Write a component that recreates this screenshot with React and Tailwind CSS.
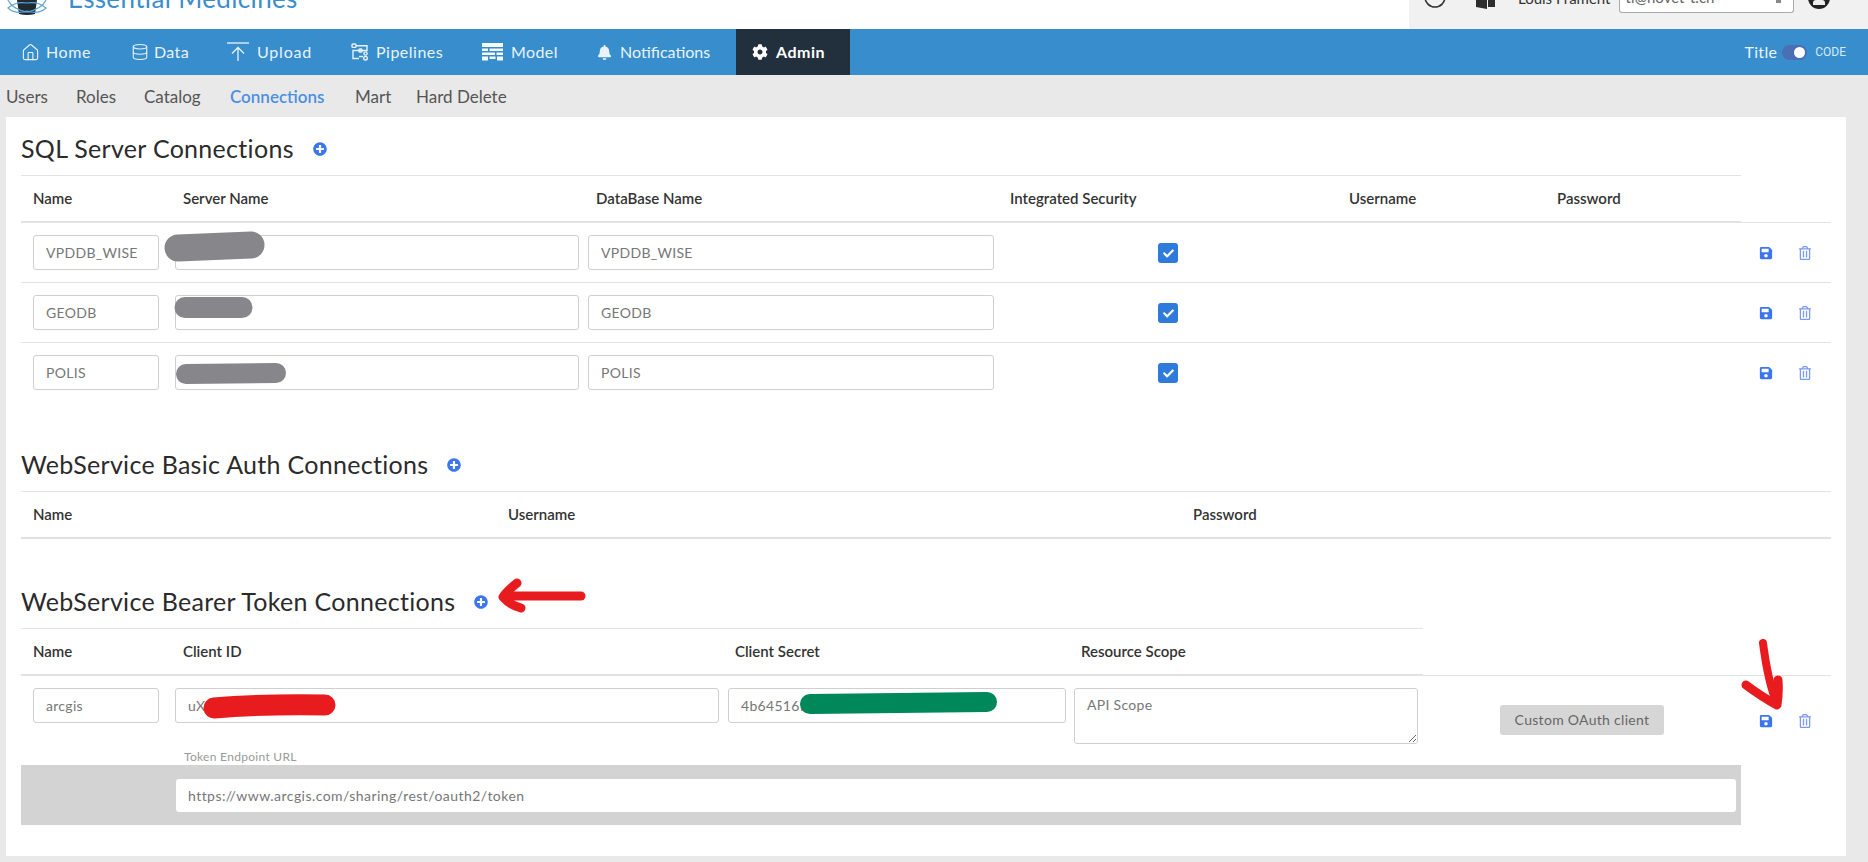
import React from "react";
import { Home, Database, Clock } from "lucide-react";
import { FaBell, FaCog, FaSave, FaRegTrashAlt, FaPlusCircle, FaCheck } from "react-icons/fa";

const UploadIcon = () => (
  <svg width="23" height="20" viewBox="0 0 23 20" fill="none" stroke="#e8f3fb" strokeWidth="1.3">
    <path d="M0 1h22" />
    <path d="M11 19V6M5 11.5 11 5.5l6 6" />
  </svg>
);

const PipelinesIcon = () => (
  <svg width="18" height="18" viewBox="0 0 18 18" fill="none" stroke="#e8f3fb" strokeWidth="1.4">
    <rect x="1" y="1" width="4" height="3.4" rx="1" />
    <path d="M5 2.7h11v4.8H2v8h6" />
    <rect x="8" y="6" width="3" height="3" rx="0.8" />
    <circle cx="14.5" cy="10.5" r="1.6" />
    <circle cx="14.5" cy="15.2" r="1.8" />
    <path d="M8 13.5h4" />
  </svg>
);

const ModelIcon = () => (
  <svg width="21" height="18" viewBox="0 0 21 18" fill="#f4f9fd">
    <path d="M0 0h21v4H0z" />
    <path d="M0 5.5h6v2.5H0zM7.500 5.500h13.500v2.500H7.500z" />
    <path d="M0 9.500h13v2.500H0zM14.500 9.500h6.500v2.500h-6.500z" />
    <path d="M0 13.500h6v4H0zM7.500 13.500h6v2.500h-6zM15 13.500h6v4h-6z" />
  </svg>
);

const navItems = [
  { label: "Home", icon: <Home size={19} strokeWidth={1.4} />, cls: "w-[110px] tracking-[0.6px]", iconCls: "w-[25px]" },
  { label: "Data", icon: <Database size={18} strokeWidth={1.4} />, cls: "w-[96px] tracking-[0.4px]", iconCls: "w-[23px]" },
  { label: "Upload", icon: <UploadIcon />, cls: "w-[124px] tracking-[0.8px]", iconCls: "w-[30px]" },
  { label: "Pipelines", icon: <PipelinesIcon />, cls: "w-[131px] tracking-[0.5px]", iconCls: "w-[25px]" },
  { label: "Model", icon: <ModelIcon />, cls: "w-[115px] tracking-[0.4px]", iconCls: "w-[29px]" },
  { label: "Notifications", icon: <FaBell size={15} />, cls: "w-[139px] tracking-normal", iconCls: "w-[23px]" },
];

const subItems = ["Users", "Roles", "Catalog", "Connections", "Mart", "Hard Delete"];

const inputCls =
  "h-[35px] border border-[#cfcfcf] rounded-[3px] bg-white px-3 text-sm text-[#777] outline-none tracking-[0.3px]";

const headerCls = "h-[48px] border-t border-[#e3e3e3] border-b-2 border-b-[#e1e1e1] pl-3 grid items-center text-[15px] font-semibold text-[#333]";

const Heading = ({ title }) => (
  <div className="h-[32px] flex items-center gap-[19px]">
    <h2 className="text-[25px] font-normal text-[#2b2b2b] tracking-[0.3px] leading-none">{title}</h2>
    <FaPlusCircle size={14} className="text-[#3b76f0] mt-[2px]" />
  </div>
);

const RowActions = () => (
  <div className="ml-auto flex items-center gap-[25px] pr-[19px] text-[#3b76f0]">
    <FaSave size={14} />
    <FaRegTrashAlt size={14} className="text-[#7c9bea]" />
  </div>
);

const SqlRow = ({ name, last }) => (
  <div className={`w-[1810px] h-[60px] pl-3 pt-3 flex items-start ${last ? "" : "border-b border-[#e3e3e3]"}`}>
    <input readOnly defaultValue={name} className={`${inputCls} w-[126px]`} />
    <input readOnly className={`${inputCls} w-[404px] ml-4`} />
    <input readOnly defaultValue={name} className={`${inputCls} w-[406px] ml-[9px]`} />
    <div className="w-5 h-5 ml-[164px] mt-2 rounded-[3px] bg-[#2f7bdc] flex items-center justify-center text-white">
      <FaCheck size={11} />
    </div>
    <div className="ml-auto h-[36px] flex">
      <RowActions />
    </div>
  </div>
);

const Annotations = () => (
  <svg className="absolute inset-0 pointer-events-none" width="1868" height="862" fill="none" strokeLinecap="round" strokeLinejoin="round">
    <path d="M178 248 251 245" stroke="#87878b" strokeWidth="27" />
    <path d="M185 307.500H242" stroke="#87878b" strokeWidth="21" />
    <path d="M186 374 276 373" stroke="#87878b" strokeWidth="20" />
    <path d="M214 708Q260 704 325 705" stroke="#e81c1e" strokeWidth="21" />
    <path d="M810 704 987 702" stroke="#00875a" strokeWidth="20" />
    <path d="M581 596H506" stroke="#e81c1e" strokeWidth="9" />
    <path d="M517 583Q506 592 503 597Q510 605 521 608" stroke="#e81c1e" strokeWidth="9" />
    <path d="M1763 643Q1768 682 1777 704" stroke="#e81c1e" strokeWidth="8" />
    <path d="M1746 685Q1762 697 1777 705Q1779 692 1778 680" stroke="#e81c1e" strokeWidth="9" />
  </svg>
);

export default function App() {
  return (
    <div className="relative w-[1868px] h-[862px] overflow-hidden bg-[#e9e9e9] font-['Lato','Open_Sans',sans-serif] text-[#444]">
      {/* top bar, cut off by the screenshot */}
      <header className="h-[29px] bg-white flex overflow-hidden">
        <svg className="ml-[6px] shrink-0" width="42" height="29" viewBox="0 0 42 29" fill="none">
          <path d="M11 0h20l-2 14q-8 2-16 0z" fill="#1f2a33" />
          <path d="M2 0q4 9 19 12q15-3 19-12M2 8q8-7 19-5q11-2 19 5q-8 7-19 3q-11 4-19-3z" stroke="#5fa5d6" strokeWidth="1.2" />
        </svg>
        <div className="ml-[20px] -mt-[17px] text-[26px] leading-[30px] text-[#3b8ecb] tracking-[0.35px] whitespace-nowrap">
          Essential Medicines
        </div>
        <div className="ml-auto w-[459px] h-full bg-[#f1f1f1] flex items-start text-[#333]">
          <Clock size={24} strokeWidth={1.6} className="ml-[14px] -mt-[15px]" />
          <svg className="ml-[29px]" width="19" height="9" viewBox="0 0 19 9" fill="#2d2d2d">
            <path d="M0 0h11v9L0 7zM12 0h7v7h-7z" />
          </svg>
          <span className="ml-[23px] -mt-[14px] text-[15px] leading-[24px] whitespace-nowrap">Louis Frament</span>
          <div className="ml-2 w-[175px] h-[13px] bg-white border border-t-0 border-[#aaa] rounded-b-[3px] overflow-hidden pl-[6px] pr-[12px] flex justify-between items-start">
            <span className="block -mt-[15px] text-[15px] leading-[24px] text-[#666]">tl@novet-t.ch</span>
            <span className="block w-[5px] h-[3px] bg-[#888]" />
          </div>
          <div className="ml-[14px] -mt-[13px] w-[22px] h-[22px] rounded-full bg-[#222] flex items-end justify-center pb-[4px]">
            <div className="w-[12px] h-[5px] rounded-t-[3px] bg-[#eee]" />
          </div>
        </div>
      </header>

      <nav className="h-[46px] bg-[#388ecc] flex items-center pl-[21px] text-[#e8f3fb] text-base">
        {navItems.map((item) => (
          <div key={item.label} className={`flex items-center ${item.cls}`}>
            <span className={`flex items-center ${item.iconCls}`}>{item.icon}</span>
            {item.label}
          </div>
        ))}
        <div className="w-[114px] h-full bg-[#222f3c] pl-4 flex items-center font-bold text-white tracking-[0.5px]">
          <FaCog size={16} className="mr-2" />
          Admin
        </div>
        <div className="ml-auto flex items-center pr-[22px]">
          <span className="tracking-[0.3px]">Title</span>
          <div className="ml-[5px] w-[25px] h-[15px] rounded-full bg-[#4a6fb5] flex items-center justify-end pr-[2px]">
            <div className="w-[11px] h-[11px] rounded-full bg-white" />
          </div>
          <span className="ml-[8px] text-xs font-['Roboto',sans-serif] text-[#d5eaf8]">CODE</span>
        </div>
      </nav>

      <div className="h-[42px] pl-[6px] pt-[2px] grid grid-cols-[70px_68px_86px_125px_61px_1fr] items-center text-[17px]">
        {subItems.map((s) => (
          <span key={s} className={s === "Connections" ? "text-[#4b90e2] font-semibold" : "text-[#555]"}>
            {s}
          </span>
        ))}
      </div>

      <main className="ml-[6px] w-[1840px] h-[739px] bg-white pl-[15px] pt-[15px]">
        <Heading title="SQL Server Connections" />
        <div className={`${headerCls} mt-[11px] w-[1720px] grid-cols-[150px_413px_414px_339px_208px_1fr]`}>
          <span>Name</span>
          <span>Server Name</span>
          <span>DataBase Name</span>
          <span>Integrated Security</span>
          <span>Username</span>
          <span>Password</span>
        </div>
        <div className="w-[1810px] border-t border-[#e3e3e3] -mt-px" />
        <SqlRow name="VPDDB_WISE" />
        <SqlRow name="GEODB" />
        <SqlRow name="POLIS" last />

        <div className="mt-[45px]">
          <Heading title="WebService Basic Auth Connections" />
        </div>
        <div className={`${headerCls} mt-[11px] w-[1810px] grid-cols-[475px_685px_1fr]`}>
          <span>Name</span>
          <span>Username</span>
          <span>Password</span>
        </div>

        <div className="mt-[46px]">
          <Heading title="WebService Bearer Token Connections" />
        </div>
        <div className={`${headerCls} mt-[11px] w-[1402px] grid-cols-[150px_552px_346px_1fr]`}>
          <span>Name</span>
          <span>Client ID</span>
          <span>Client Secret</span>
          <span>Resource Scope</span>
        </div>
        <div className="w-[1810px] border-t border-[#e3e3e3] -mt-px" />
        <div className="w-[1810px] pl-3 pt-3 flex items-start">
          <input readOnly defaultValue="arcgis" className={`${inputCls} w-[126px]`} />
          <input readOnly defaultValue="uX" className={`${inputCls} w-[544px] ml-4`} />
          <input readOnly defaultValue="4b64516f" className={`${inputCls} w-[338px] ml-[9px]`} />
          <textarea
            readOnly
            placeholder="API Scope"
            className={`${inputCls} w-[344px] !h-[56px] ml-2 py-1.5 placeholder:text-[#777]`}
          />
          <button className="ml-[82px] mt-[17px] w-[164px] h-[30px] rounded-[3px] bg-[#d6d6d6] text-sm text-[#666] tracking-[0.3px]">
            Custom OAuth client
          </button>
          <div className="ml-auto h-[66px] -mb-[10px] flex">
            <RowActions />
          </div>
        </div>
        <div className="h-[21px] pl-[163px] pt-[5px] text-xs leading-[16px] text-[#999] tracking-[0.3px]">
          Token Endpoint URL
        </div>
        <div className="w-[1720px] h-[60px] bg-[#d3d3d3] pl-[155px] pr-[5px] pt-[14px]">
          <input
            readOnly
            defaultValue="https://www.arcgis.com/sharing/rest/oauth2/token"
            className="w-full h-[33px] rounded-[3px] bg-white px-3 text-sm text-[#777] outline-none tracking-[0.45px]"
          />
        </div>
      </main>

      <Annotations />
    </div>
  );
}
